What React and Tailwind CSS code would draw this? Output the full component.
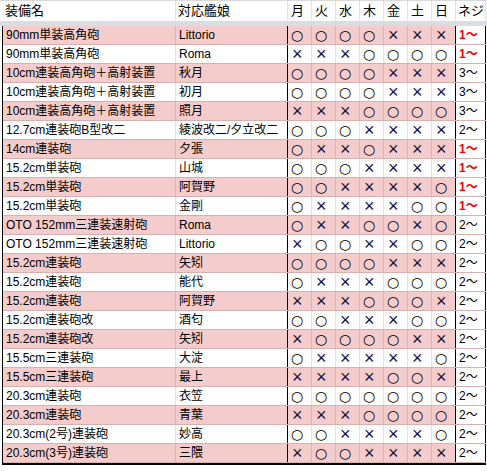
import React from "react";

const rows = [
  ["90mm単装高角砲", "Littorio", "ooooxxx", "1"],
  ["90mm単装高角砲", "Roma", "xxxoooo", "1"],
  ["10cm連装高角砲＋高射装置", "秋月", "ooooxxx", "3"],
  ["10cm連装高角砲＋高射装置", "初月", "ooooxxx", "3"],
  ["10cm連装高角砲＋高射装置", "照月", "xxxoooo", "3"],
  ["12.7cm連装砲B型改二", "綾波改二/夕立改二", "oooxxxx", "2"],
  ["14cm連装砲", "夕張", "oxxoxxx", "1"],
  ["15.2cm単装砲", "山城", "oooxxxx", "1"],
  ["15.2cm単装砲", "阿賀野", "ooxxxxo", "1"],
  ["15.2cm単装砲", "金剛", "oxxxxoo", "1"],
  ["OTO 152mm三連装速射砲", "Roma", "oxxooxo", "2"],
  ["OTO 152mm三連装速射砲", "Littorio", "xooxxoo", "2"],
  ["15.2cm連装砲", "矢矧", "ooooxxx", "2"],
  ["15.2cm連装砲", "能代", "oxxxooo", "2"],
  ["15.2cm連装砲", "阿賀野", "xxxooox", "2"],
  ["15.2cm連装砲改", "酒匂", "ooxxxoo", "2"],
  ["15.2cm連装砲改", "矢矧", "xooooxx", "2"],
  ["15.5cm三連装砲", "大淀", "oxxxxxo", "2"],
  ["15.5cm三連装砲", "最上", "xxxxoox", "2"],
  ["20.3cm連装砲", "衣笠", "ooooooo", "2"],
  ["20.3cm連装砲", "青葉", "xxxoooo", "2"],
  ["20.3cm(2号)連装砲", "妙高", "ooxxxxo", "2"],
  ["20.3cm(3号)連装砲", "三隈", "xooxxxx", "2"],
];

const days = ["月", "火", "水", "木", "金", "土", "日"];

export default function App() {
  return (
    <div
      className="w-[487px] h-[471px] bg-white overflow-hidden text-black"
      style={{ fontFamily: '"Liberation Sans", "Noto Sans CJK JP", sans-serif' }}
    >
      {/* header */}
      <div className="flex h-[21px] border-t border-[#d9d9d9] text-[13px] leading-[20px]">
        <div className="w-[3px]" />
        <div className="w-[173px] border-r border-[#e2e2e2] pl-[2px]">装備名</div>
        <div className="w-[112px] border-r border-[#e2e2e2] pl-[2px]">対応艦娘</div>
        {days.map((d) => (
          <div key={d} className="w-[24px] border-r border-[#e2e2e2] pl-[3px]">
            {d}
          </div>
        ))}
        <div className="w-[30px] border-r border-[#e2e2e2] pl-[2px]">ネジ</div>
      </div>
      {/* frozen band */}
      <div className="h-[5px] bg-[#dadde2]" />
      {/* body */}
      <div className="ml-[2px] w-[484px] border-l border-black border-b-2 border-b-black">
        {rows.map((r, i) => {
          const pink = i % 2 === 0;
          const bg = pink ? "bg-[#f4cccc]" : "bg-white";
          const vb = pink ? "border-[#dcb4b4]" : "border-[#e2e2e2]";
          return (
            <div
              key={i}
              className={`flex h-[19px] text-[12px] leading-[18px] border-b border-b-[#d9b0b0] ${bg}`}
            >
              <div className={`w-[173px] border-r ${vb} pl-[3px] whitespace-nowrap overflow-hidden`}>
                {r[0]}
              </div>
              <div className="w-[112px] border-r border-black pl-[3px] whitespace-nowrap overflow-hidden">
                {r[1]}
              </div>
              {r[2].split("").map((c, j) => (
                <div
                  key={j}
                  className={`w-[24px] border-r ${j === 6 ? "border-black" : vb} pl-[3px] flex items-center`}
                >
                  {c === "o" ? (
                    <span className="text-[14px] leading-[18px] text-black" style={{ fontFamily: '"DejaVu Sans", sans-serif' }}>○</span>
                  ) : (
                    <span className="text-[18px] leading-[18px] text-[#14143c] pl-[1px]" style={{ fontFamily: '"Liberation Sans", sans-serif' }}>×</span>
                  )}
                </div>
              ))}
              <div className="w-[30px] border-r border-black bg-white pl-[3px] whitespace-nowrap">
                {r[3] === "1" ? (
                  <span className="font-bold text-[#ff0000]">1〜</span>
                ) : (
                  <span>{r[3]}〜</span>
                )}
              </div>
            </div>
          );
        })}
      </div>
    </div>
  );
}
